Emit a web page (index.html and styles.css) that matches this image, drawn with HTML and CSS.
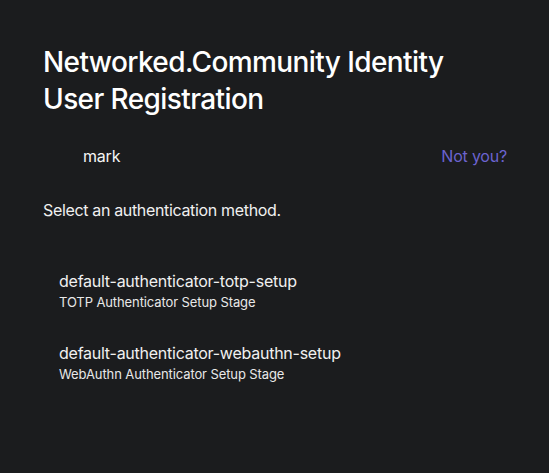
FILE: index.html
```html
<!DOCTYPE html>
<html lang="en">
<head>
<meta charset="utf-8">
<title>User Registration</title>
<link rel="stylesheet" href="styles.css">
</head>
<body>
<main class="card">
  <h1 class="title">Networked.Community Identity User Registration</h1>
  <div class="identity">
    <span class="user">mark</span>
    <a class="notyou" href="#">Not you?</a>
  </div>
  <p class="prompt">Select an authentication method.</p>
  <ul class="methods">
    <li class="method">
      <div class="m-name">default-authenticator-totp-setup</div>
      <div class="m-desc">TOTP Authenticator Setup Stage</div>
    </li>
    <li class="method">
      <div class="m-name">default-authenticator-webauthn-setup</div>
      <div class="m-desc">WebAuthn Authenticator Setup Stage</div>
    </li>
  </ul>
</main>
</body>
</html>
```
FILE: styles.css
```css
html, body {
  margin: 0;
  padding: 0;
  background: #1b1c1e;
  color: #f0f0f0;
  font-family: Inter, "Noto Sans", sans-serif;
}
.card {
  padding: 44px 42px 0 43px;
  box-sizing: border-box;
  width: 549px;
}
.title {
  margin: 0;
  font-size: 28px;
  line-height: 37px;
  font-weight: 500;
  letter-spacing: -0.6px;
  width: 420px;
  color: #ffffff;
}
.identity {
  display: flex;
  justify-content: space-between;
  align-items: center;
  margin-top: 26px;
  padding-left: 40px;
  font-size: 16px;
  line-height: 24px;
  letter-spacing: -0.2px;
}
.user { color: #f5f5f5; }
.notyou {
  color: #6b63cf;
  text-decoration: none;
}
.prompt {
  margin: 30px 0 0;
  font-size: 16px;
  line-height: 24px;
  letter-spacing: -0.34px;
  color: #f0f0f0;
}
.methods {
  list-style: none;
  margin: 48px 0 0;
  padding: 0 0 0 16px;
}
.method {
  height: 72px;
}
.m-name {
  font-size: 16px;
  line-height: 22px;
  letter-spacing: -0.25px;
  color: #f0f0f0;
}
.m-desc {
  font-size: 13px;
  line-height: 20px;
  letter-spacing: -0.1px;
  color: #e8e8e8;
}
```
